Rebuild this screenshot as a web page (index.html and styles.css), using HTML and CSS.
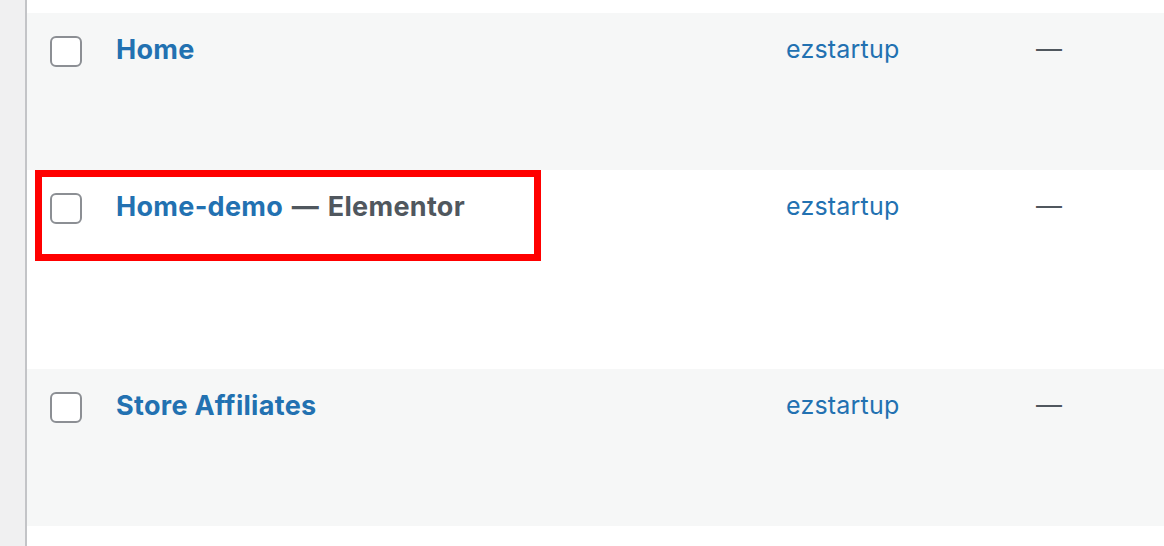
FILE: index.html
```html
<!DOCTYPE html>
<html>
<head>
<meta charset="utf-8">
<link rel="stylesheet" href="styles.css">
</head>
<body>
<div class="page">
  <div class="sidebar"></div>
  <div class="content">
    <div class="list">
      <div class="row alt">
        <div class="cb-cell"><span class="cb"></span></div>
        <div class="title-cell"><a class="title">Home</a></div>
        <div class="author-cell"><a class="author">ezstartup</a></div>
        <div class="dash-cell">—</div>
      </div>
      <div class="row tall">
        <div class="cb-cell"><span class="cb"></span></div>
        <div class="title-cell"><a class="title">Home-demo</a><span class="state"> — Elementor</span></div>
        <div class="author-cell"><a class="author">ezstartup</a></div>
        <div class="dash-cell">—</div>
      </div>
      <div class="row alt">
        <div class="cb-cell"><span class="cb"></span></div>
        <div class="title-cell"><a class="title">Store Affiliates</a></div>
        <div class="author-cell"><a class="author">ezstartup</a></div>
        <div class="dash-cell">—</div>
      </div>
    </div>
    <div class="highlight"></div>
  </div>
</div>
</body>
</html>
```
FILE: styles.css
```css
html, body {
  margin: 0;
  padding: 0;
  background: #ffffff;
  font-family: Inter, "Liberation Sans", sans-serif;
}
.page {
  display: flex;
  width: 1164px;
  height: 546px;
  overflow: hidden;
}
.sidebar {
  width: 25px;
  flex: none;
  background: #f0f0f1;
  border-right: 2px solid #c3c4c7;
}
.content {
  position: relative;
  flex: 1;
  padding-top: 13px;
}
.list {
  display: flex;
  flex-direction: column;
}
.row {
  display: flex;
  align-items: flex-start;
  height: 157px;
  background: #ffffff;
}
.row.alt {
  background: #f6f7f7;
}
.row.tall {
  height: 199px;
}
.cb-cell {
  width: 89px;
  flex: none;
  padding-top: 23px;
  display: flex;
  justify-content: flex-start;
}
.cb {
  display: block;
  margin-left: 23px;
  width: 28px;
  height: 27px;
  border: 2px solid #8c8f94;
  border-radius: 6px;
  background: #ffffff;
}
.title-cell {
  width: 670px;
  flex: none;
  padding-top: 22px;
  font-size: 27px;
  font-weight: 700;
  letter-spacing: 0.3px;
  line-height: 30px;
  color: #50575e;
}
.title {
  color: #2271b1;
}
.state {
  color: #50575e;
  word-spacing: 2px;
}
.author-cell {
  width: 250px;
  flex: none;
  padding-top: 22px;
  font-size: 25px;
  letter-spacing: 0.2px;
  line-height: 28px;
}
.author {
  color: #2271b1;
}
.dash-cell {
  padding-top: 22px;
  font-size: 26px;
  line-height: 28px;
  color: #50575e;
}
.highlight {
  position: absolute;
  left: 8px;
  top: 170px;
  width: 492px;
  height: 77px;
  border: 7px solid #ff0000;
}
```
